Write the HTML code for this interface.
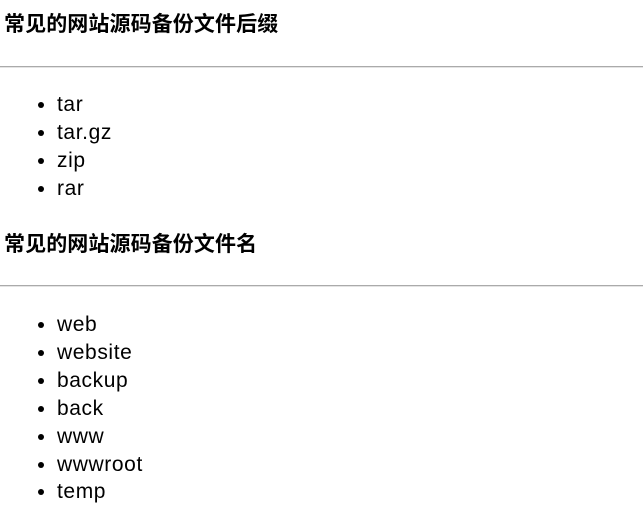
<!DOCTYPE html>
<html><head><meta charset="utf-8"><style>
body{margin:0;width:643px;height:512px;background:#fff;font-family:"Liberation Sans","Noto Sans CJK SC",sans-serif;color:#000;position:relative;overflow:hidden}
h3{position:absolute;left:4px;margin:0;font-size:21px;font-weight:bold;letter-spacing:0.1px;line-height:24px;white-space:nowrap}
.hr{position:absolute;left:0;width:643px;height:0;border-top:1px solid #aaa;border-bottom:1px solid #e4e4e4}
ul{position:absolute;left:0;margin:0;padding:0 0 0 57px;font-size:21px;letter-spacing:0.6px;line-height:27.9px}
li{list-style:disc}
</style></head><body>
<h3 style="top:13px">常见的网站源码备份文件后缀</h3>
<div class="hr" style="top:66px"></div>
<ul style="top:91px"><li>tar</li><li>tar.gz</li><li>zip</li><li>rar</li></ul>
<h3 style="top:233px">常见的网站源码备份文件名</h3>
<div class="hr" style="top:285px"></div>
<ul style="top:311px"><li>web</li><li>website</li><li>backup</li><li>back</li><li>www</li><li>wwwroot</li><li>temp</li></ul>
</body></html>
